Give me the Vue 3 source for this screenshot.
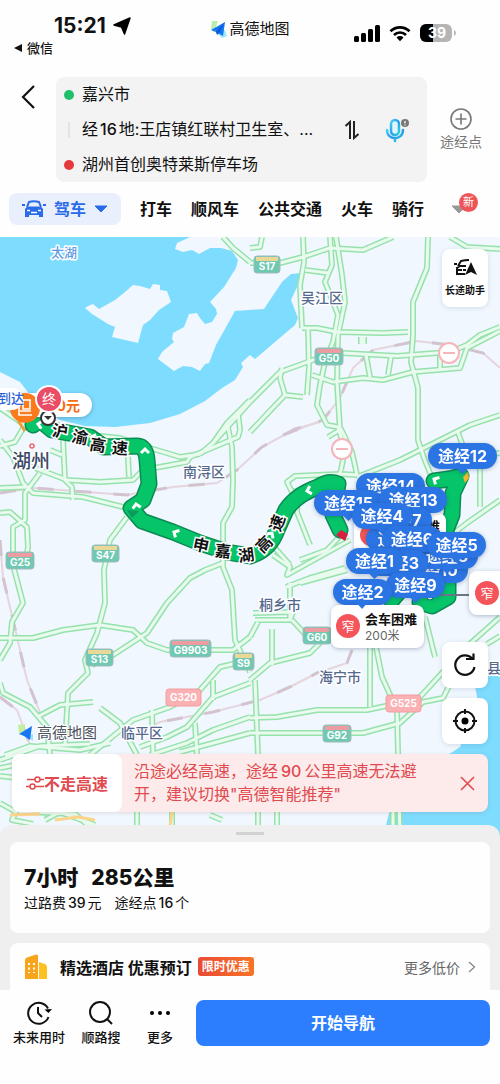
<template>
  <div class="route-page">
    <!-- 状态栏 -->
    <header class="status-bar">
      <div class="status-left">
        <div class="status-time">
          <span>15:21</span>
          <svg width="18" height="18" viewBox="0 0 18 18"><path d="M17 1 11.500 17 8.500 10 1 8z" fill="#000" stroke="#000" stroke-width="1.500" stroke-linejoin="round" /></svg>
        </div>
        <a class="status-back" href="#"><span class="tri"></span>微信</a>
      </div>
      <div class="brand">
        <svg width="18" height="18" viewBox="0 0 18 18">
          <path d="M2 1h6L4 13 1 9z" fill="#b9efad" />
          <path d="m7 13 8-3 2 6-5 2z" fill="#9de7fb" />
          <path d="M15 2 1 10l5 2 7 4z" fill="#1677f2" />
          <path d="M15 2 6 12l1 3 2-2z" fill="#0b56cf" />
        </svg>
        <span>高德地图</span>
      </div>
      <div class="status-right">
        <svg width="26" height="17" viewBox="0 0 26 17">
          <rect x="0" y="11" width="5" height="6" rx="1.5" />
          <rect x="7" y="8" width="5" height="9" rx="1.5" />
          <rect x="14" y="4" width="5" height="13" rx="1.5" />
          <rect x="21" y="0" width="5" height="17" rx="1.5" />
        </svg>
        <svg width="22" height="17" viewBox="0 0 22 17">
          <path d="M1.500 6.300a13.500 13.500 0 0 1 19 0M5 10a8.500 8.500 0 0 1 12 0" fill="none" stroke="#000" stroke-width="2.700" />
          <path d="m7.500 12.500 3.500 3.700 3.500-3.700a5 5 0 0 0-7 0z" />
        </svg>
        <svg width="36" height="18" viewBox="0 0 36 18">
          <rect width="32" height="18" rx="6" fill="#b5b5b5" />
          <path d="M6 0h7v18H6a6 6 0 0 1-6-6V6a6 6 0 0 1 6-6z" />
          <path d="M34 6v6q2-1 2-3t-2-3z" fill="#b5b5b5" />
          <text x="17" y="14" class="battery-text">39</text>
        </svg>
      </div>
    </header>

    <!-- 起终点 -->
    <section class="search-row">
      <button class="icon-btn back" aria-label="返回">
        <svg width="16" height="26" viewBox="0 0 16 26"><path d="M14 2 3 13l11 11" fill="none" stroke="#111" stroke-width="2.200" /></svg>
      </button>
      <div class="address-box">
        <div class="address-list">
          <button class="address"><i class="dot dot-from"></i>嘉兴市</button>
          <button class="address"><i class="bar"></i>经<b>16</b>地:王店镇红联村卫生室、...</button>
          <button class="address"><i class="dot dot-to"></i>湖州首创奥特莱斯停车场</button>
        </div>
        <button class="icon-btn" aria-label="交换">
          <svg width="16" height="20" viewBox="0 0 16 20"><path d="M1.500 6 6 2v17M10 1v17l4.500-4" fill="none" stroke="#222" stroke-width="2" /></svg>
        </button>
        <button class="icon-btn" aria-label="语音">
          <svg width="26" height="26" viewBox="0 0 26 26">
            <defs>
              <linearGradient id="mic" x1="0" y1="0" x2="1" y2="1">
                <stop offset="0" stop-color="#47d3f4" />
                <stop offset=".5" stop-color="#2b96f4" />
                <stop offset="1" stop-color="#25d8d0" />
              </linearGradient>
            </defs>
            <rect x="7" y="3" width="8" height="15" rx="4" fill="#dff6fc" stroke="url(#mic)" stroke-width="2.500" />
            <path d="M3 13c0 11 16 11 16 0M11 21v3" fill="none" stroke="url(#mic)" stroke-width="2.500" stroke-linecap="round" />
            <circle cx="21" cy="6" r="4" fill="#777" />
            <path d="M21 4v2.500M21 7.500v1" stroke="#fff" stroke-width="1.200" />
          </svg>
        </button>
      </div>
      <button class="add-point">
        <svg width="24" height="24" viewBox="0 0 24 24"><path d="M12 6.500v11M6.500 12h11" stroke="#777" stroke-width="1.600" /><circle cx="12" cy="12" r="10" fill="none" stroke="#777" stroke-width="1.600" /></svg>
        <span>途经点</span>
      </button>
    </section>

    <!-- 出行方式 -->
    <nav class="modes">
      <button class="mode active">
        <svg width="24" height="18" viewBox="0 0 24 18">
          <path d="M5 7 7 2q5-1.500 10 0l2 5" fill="none" stroke="#2a6bea" stroke-width="2" />
          <path d="M3 9q1-2.500 4-2.500h10q3 0 4 2.500v8h-4v-2H7v2H3z" fill="#2a6bea" />
          <path d="M0 5h3M21 5h3" stroke="#2a6bea" stroke-width="2" />
          <path d="M5 10.500h3M16 10.500h3M9 12.500h6" stroke="#fff" stroke-width="1.600" />
        </svg>
        <span>驾车</span>
        <svg width="14" height="8" viewBox="0 0 14 8"><path d="M1 1h12L7 7z" fill="#2a6bea" stroke="#2a6bea" stroke-linejoin="round" /></svg>
      </button>
      <button v-for="mode in modes" :key="mode" class="mode">{{ mode }}</button>
      <button class="mode-more" aria-label="更多方式">
        <svg width="16" height="9" viewBox="0 0 16 9"><path d="M1 1h14L8 8z" fill="#999" stroke="#999" stroke-linejoin="round" /></svg>
        <span class="badge">新</span>
      </button>
    </nav>

    <!-- 地图 -->
    <main class="map">
      <svg class="map-canvas" viewBox="0 237 500 600">
        <rect y="237" width="500" height="600" fill="#f0f7fe" />
        <path d="M0 237H190L177 243 175 249 183 252 192 250 199 254 210 248 221 248 232 251 238 260 236 268 224 287 210 302 216 309 217 314 212 322 205 324 200 318 197 313 189 314 184 327 173 333 172 339 174 342 162 352 158 359 174 371 183 366 192 367 200 371 205 364 209 363 216 345 235 311 264 309 282 282 291 274 301 273 297 287 291 300 298 318 295 325 255 359 250 355 241 363 243 367 235 380 222 388 205 401 180 414 150 423 115 427 85 426 60 420 38 405 20 382 0 372Z" fill="#7edcfe" />
        <path d="m88 306 5-2 6 5 16-9 10-8 8-7 7 1 10 3 3-5 7 1v5l7 1 4 11-12 8-9 10-7 5-5 18-26-6 3-10-7-3-16-10-7-6z" fill="#f0f7fe" />
        <path d="M500 676H482L475 686 478 702 460 747 395 790 383 837H500Z" fill="#7edcfe" />

        <!-- 铁路 -->
        <g fill="none">
          <path v-for="(d, i) in rails" :key="'rb' + i" :d="d" class="rail-base" />
          <path v-for="(d, i) in rails" :key="'rd' + i" :d="d" class="rail-dash" />
        </g>

        <!-- 道路 -->
        <g fill="none" stroke-linejoin="round">
          <path v-for="(d, i) in roads" :key="'o' + i" :d="d" class="road-edge" />
          <path v-for="(d, i) in roads" :key="'i' + i" :d="d" class="road-fill" />
          <path d="M10 815 40 814M55 820 78 817 95 820M172 812 170 827" stroke="#fbd58a" stroke-width="3" />
        </g>

        <text v-for="p in places" :key="p.name" :x="p.x" :y="p.y" class="place" :class="p.kind">{{ p.name }}</text>
        <circle cx="32" cy="446" r="2" fill="#fff" stroke="#ec6b70" stroke-width="1.600" />

        <!-- 道路编号 -->
        <g v-for="s in shields" :key="s.name">
          <rect :x="s.x" :y="s.y" :width="s.w" height="17" rx="3" class="shield" :class="{ national: s.red }" />
          <rect v-if="!s.red" :x="s.x + 2" :y="s.y + 1" :width="s.w - 4" height="4" :fill="s.top" />
          <text :x="s.x + s.w / 2" :y="s.red ? s.y + 12 : s.y + 14" class="shield-text">{{ s.name }}</text>
        </g>
        <g v-for="c in closures" :key="c.x" class="closure">
          <circle :cx="c.x" :cy="c.y" r="10" />
          <path :d="`M${c.x - 6} ${c.y}h12`" />
        </g>

        <!-- 导航路线 -->
        <path d="m25 431-6-9 7-10" fill="none" stroke="#e9a33d" stroke-width="3" />
        <g fill="none" stroke-linejoin="round" stroke-linecap="round">
          <path v-for="(d, i) in routes" :key="'a' + i" :d="d" class="route-edge" />
          <path v-for="(d, i) in routes" :key="'b' + i" :d="d" class="route-fill" />
        </g>
        <path d="m336 535 5-5 7 4-3 7z" fill="#d71f3f" />
        <path d="m463 477 5-5 1 6-4 5z" fill="#f2b632" />
        <path d="m127 510 12 1-7 7z" fill="#0a9a5b" />
        <path v-for="(a, i) in arrows" :key="'c' + i" d="M-4 4 0 0 4 4" :transform="`translate(${a[0]} ${a[1]}) rotate(${a[2]})`" class="chevron" />
        <text v-for="(c, i) in roadNames" :key="'n' + i" class="road-name" :transform="`translate(${c[1]} ${c[2]}) rotate(${c[3]})`">{{ c[0] }}</text>

        <!-- 终点 -->
        <rect x="14" y="393" width="78" height="24" rx="12" fill="#fff" class="shadow" />
        <text x="80" y="411" text-anchor="end" class="price">30元</text>
        <circle cx="25" cy="408" r="15" fill="#fb7b1c" />
        <path d="M19 407v8h13M23 400h7v9h-7zM20 411h11" fill="none" stroke="#fff" stroke-width="1.600" />
        <path d="M0 388h12a11 11 0 0 1 0 22H0z" fill="#fff" />
        <text x="-2" y="403" class="arrive">到达</text>
        <circle cx="48" cy="418" r="7" fill="#fff" stroke="#333" stroke-width="2" />
        <path d="m44 416 4 4 4-4" fill="#333" />
        <circle cx="49" cy="399" r="13" fill="#e94c64" stroke="#fff" stroke-width="2" />
        <text x="49" y="404" class="end-text">终</text>

        <!-- 途经点 -->
        <g class="shadow">
          <rect x="354" y="513" width="92" height="42" rx="8" fill="#fff" />
          <circle cx="371" cy="535" r="11" fill="#f3555a" />
          <text x="388" y="531" class="tip-title">会车困难</text>
        </g>
        <path d="M440 595H480" stroke="#6d7688" stroke-width="2" />
        <circle cx="430" cy="597" r="3" fill="#fff" stroke="#0b7f4f" />
        <g v-for="w in waypoints" :key="w.name" class="shadow">
          <path :d="`M${w.x + w.w / 2 - 7} ${w.y + 24}l7 7 7-7z`" fill="#2b74e4" />
          <rect :x="w.x" :y="w.y" :width="w.w" height="26" rx="13" fill="#2b74e4" />
          <text :x="w.x + w.w / 2" :y="w.y + 19" class="way-text">{{ w.name }}</text>
        </g>
        <g class="shadow">
          <rect x="331" y="605" width="93" height="43" rx="8" fill="#fff" />
          <rect x="469" y="571" width="50" height="44" rx="8" fill="#fff" />
        </g>
        <path d="m354 600 8 9 8-9z" fill="#2b74e4" />
        <g v-for="n in narrows" :key="n.x">
          <circle :cx="n.x" :cy="n.y" r="12" fill="#f3555a" />
          <text :x="n.x" :y="n.y + 5" class="narrow">窄</text>
        </g>
        <text x="365" y="624" class="tip-title">会车困难</text>
        <text x="365" y="640" class="tip-sub">200米</text>

        <!-- 地图水印 -->
        <path d="m18 725 7-1-1 12-5-3z" fill="#c4ef9f" />
        <path d="m26 736 7-2v7z" fill="#9de2fa" />
        <path d="m32 726-13 8 5 2 6 4z" fill="#1677f2" />
        <text x="37" y="738" class="watermark">高德地图</text>
      </svg>

      <button class="map-btn helper">
        <svg width="24" height="18" viewBox="0 0 24 18">
          <path d="M5 7 8 2q4-1 8-1M1 5h3M4 16V9l3-2h6M5 11h4M10 11h3M4 15h8" fill="none" stroke="#111" stroke-width="2" />
          <path d="M18 3 12 16l6-3 6 3z" fill="#111" />
        </svg>
        <span>长途助手</span>
      </button>
      <div class="map-tools">
        <button class="map-btn" aria-label="刷新">
          <svg width="26" height="26" viewBox="0 0 26 26"><path d="M20.500 7A9.700 9.700 0 1 0 22.500 15M14 7h7.500V1.500" fill="none" stroke="#111" stroke-width="2.200" /></svg>
        </button>
        <button class="map-btn" aria-label="定位">
          <svg width="26" height="26" viewBox="0 0 26 26"><circle cx="13" cy="13" r="9.500" fill="none" stroke="#111" stroke-width="2" /><circle cx="13" cy="13" r="3.500" /><path d="M13 1v5M13 20v5M1 13h5M20 13h5" stroke="#111" stroke-width="2" /></svg>
        </button>
      </div>

      <div class="notice">
        <button class="notice-tag">
          <svg width="18" height="16" viewBox="0 0 18 16"><g fill="none" stroke="#e14a4e" stroke-width="1.500"><path d="M1 4.500h8M14 4.500h4M0 11.500h4M9 11.500h9" /><circle cx="11.500" cy="4.500" r="2.500" /><circle cx="6.500" cy="11.500" r="2.500" /></g></svg>
          <span>不走高速</span>
        </button>
        <p>沿途必经高速，途经<b>90</b>公里高速无法避开，建议切换"高德智能推荐"</p>
        <button class="icon-btn" aria-label="关闭">
          <svg width="15" height="15" viewBox="0 0 15 15"><path d="m1 1 13 13M14 1 1 14" stroke="#e14a4e" stroke-width="1.600" /></svg>
        </button>
      </div>
    </main>

    <!-- 底部面板 -->
    <section class="sheet">
      <div class="handle"></div>
      <div class="card summary">
        <h2><span>7小时</span><span>285公里</span></h2>
        <p><span>过路费<b>39</b>元</span><span>途经点<b>16</b>个</span></p>
      </div>
      <div class="card hotel">
        <svg width="24" height="26" viewBox="0 0 24 26">
          <path d="M1 6q0-2 2-2.500L12 .500q2-.500 2 1.500V25H1z" fill="#f9a51b" />
          <path d="M15 8l6 2q2 1 2 3v12h-8z" fill="#fcc021" />
          <path d="M5 9v10M10 9v10" stroke="#fff" stroke-width="2" stroke-dasharray="2 2.500" />
        </svg>
        <h3>精选酒店 优惠预订</h3>
        <span class="sale">限时优惠</span>
        <a class="more" href="#">更多低价
          <svg width="8" height="12" viewBox="0 0 8 12"><path d="m1 1 5.500 5L1 11" fill="none" stroke="#888" stroke-width="1.300" /></svg>
        </a>
      </div>
    </section>

    <footer class="footer">
      <button class="tool">
        <svg width="26" height="26" viewBox="0 0 26 26"><path d="M22 8.500A10.500 10.500 0 1 0 22.500 17M12 7v6l4 4" fill="none" stroke="#111" stroke-width="2" /><path d="M18.500 9.500 26 9l-3.500 4z" /></svg>
        <span>未来用时</span>
      </button>
      <button class="tool">
        <svg width="26" height="26" viewBox="0 0 26 26"><circle cx="12" cy="12" r="10" fill="none" stroke="#111" stroke-width="2" /><path d="m19 19 5 5" stroke="#111" stroke-width="2" /></svg>
        <span>顺路搜</span>
      </button>
      <button class="tool">
        <svg width="26" height="26" viewBox="0 0 26 26"><circle cx="5" cy="13" r="2" /><circle cx="13" cy="13" r="2" /><circle cx="21" cy="13" r="2" /></svg>
        <span>更多</span>
      </button>
      <button class="go-btn">开始导航</button>
    </footer>
  </div>
</template>

<script setup>
const modes = ['打车', '顺风车', '公共交通', '火车', '骑行']

const roads = [
  'M303 237 304 262 300 285 302 328',
  'M330 237 332 265 325 282 338 315 333 342 325 362 320 385 317 405 327 425 338 427 345 450 341 470',
  'M336 237 342 275 345 302 338 335 337 382 340 430',
  'M428 237 427 268 413 302 413 335 411 362 418 388 418 440 424 458 432 478',
  'M250 263 280 263 303 257 330 248 363 250 393 237',
  'M223 237 233 248 250 262',
  'M250 248 260 247 262 237',
  'M302 328 317 328 337 332 383 333 408 332',
  'M305 270 328 273',
  'M213 443 250 402 280 372 313 360 343 353 397 356 450 352 467 345 480 335 500 327',
  'M312 375 333 382 363 378 383 380 413 372 460 368 467 348 500 331',
  'M308 328 309 368 307 395',
  'M282 368 280 378 285 395 303 397M250 432 285 395',
  'M366 355 370 377M391 357 388 375M440 355V371M361 337V344M364 337V344',
  'M450 237 467 247 500 249',
  'M357 477 400 460 440 440 470 425 500 415',
  'M341 470 334 490M328 437 341 429 352 452 357 475 341 474 295 476 287 482 292 492 325 482',
  'M298 492 297 512 310 545',
  'M457 430 467 457 500 453M480 457V507M500 500 467 523 445 540',
  'M200 454 180 457 150 448 120 438 90 435 72 430',
  'M250 400 227 423 213 443 200 454',
  'M238 413 240 430 238 437 190 457 187 462 143 470 133 480 100 482 67 480 27 465',
  'M227 423 232 447 233 480 232 507 223 523 223 567 232 590 235 640 250 672',
  'M0 440 13 457 23 483 33 493 83 497 127 508',
  'M63 440 65 480 72 487 73 500M128 457 129 477',
  'M0 408 25 425 15 442 0 446M50 450 62 455',
  'M40 473 25 493 25 520 13 527 13 565 23 603 12 622 10 643 0 660',
  'M0 513 10 512 27 527 28 547 25 567M0 488 27 487',
  'M127 517 110 540 104 570 105 603 97 633 85 660 88 673 68 693 65 745',
  'M223 563 205 570 190 578 167 603 147 633 113 655 92 665',
  'M0 638 33 638 63 630 100 625 133 630 147 643 167 650 233 650 250 637',
  'M0 683 3 693 30 707 47 727 50 755',
  'M37 717 60 705 93 702M100 708 120 723 137 755',
  'M250 660 220 667 200 690 170 707 133 720 90 755',
  'M250 683 213 697 187 727 167 737 140 747',
  'M213 680 213 700M152 710 153 755M195 723 197 755',
  'M250 717 213 730 187 743 150 755M250 733 217 742 180 752',
  'M250 680 270 663 310 653 333 630',
  'M255 620 290 620 293 612 253 613M272 629 272 665M292 620 305 634 318 633',
  'M273 555 290 567 287 575 350 540M286 587 310 578 345 568M300 583 347 570M290 583V620',
  'M275 548 290 565M250 637 258 622',
  'M250 718 277 717 317 710 367 710 400 703 420 697 463 650 500 617',
  'M250 733 287 733 363 733 400 723 423 702 443 698 452 680',
  'M370 647V707M376 647 382 677 397 710 400 837',
  'M425 617 435 657M487 644 500 636M255 680 258 755 258 837',
  'M300 560 327 550 343 533',
  'M0 768 30 762 75 757 125 762M0 776 35 780M0 803 16 812 12 820 33 824M30 812 75 814 90 827',
  'M45 820 60 812 95 825M137 812V830M172 812V830M210 815 222 820M277 812V830M393 812V830',
  'M0 760 40 746 90 744M5 755 30 746 80 750 110 743'
]

const rails = [
  'M283 435 323 420 340 398 353 368 373 350 417 341 450 345 483 353 500 368',
  'M0 493 33 488 127 495 173 487 217 483 237 470 262 447 295 429 320 422',
  'M0 540 3 577 13 620 27 680 43 720 50 740',
  'M0 697 17 710 30 745',
  'M133 737 160 722 213 712 260 700 290 687 317 673 347 663 352 650'
]

const routes = [
  'M33 425 40 420 52 430 90 437 104 447 137 446Q146 446 147 460L149 484 143 500 131 508 142 521 173 532 200 543 227 552 250 556Q270 550 277 530L286 510Q296 495 318 487 329 480 338 484L333 515 340 530',
  'M434 481 449 479 461 476 453 493 452 515 444 535',
  'M380 590 392 600 405 585 420 575M448 575 448 597 432 606 420 602'
]

const arrows = [
  [38, 424, -80], [145, 449, 0], [136, 504, -10], [174, 532, -60], [307, 491, -105], [434, 479, -60], [91, 437, -70], [272, 533, 35]
]

const roadNames = [
  ['沪', 60, 431, 8], ['渝', 80, 437, 12], ['高', 98, 445, 10], ['速', 120, 448, 4],
  ['申', 201, 545, 12], ['嘉', 223, 551, 5], ['湖', 246, 555, -8], ['高', 264, 544, -45], ['速', 277, 523, -70]
]

const places = [
  { name: '太湖', x: 64, y: 257, kind: 'water' },
  { name: '吴江区', x: 322, y: 303 },
  { name: '湖州', x: 31, y: 468, kind: 'city' },
  { name: '南浔区', x: 204, y: 477 },
  { name: '桐乡市', x: 280, y: 610 },
  { name: '海宁市', x: 340, y: 682 },
  { name: '临平区', x: 142, y: 738 },
  { name: '县', x: 494, y: 673 }
]

const shields = [
  { name: 'S17', x: 254, y: 256, w: 26, top: '#e9d896' },
  { name: 'G50', x: 315, y: 348, w: 28, top: '#ef9ba2' },
  { name: 'G25', x: 6, y: 552, w: 28, top: '#ef9ba2' },
  { name: 'S47', x: 92, y: 545, w: 27, top: '#e9d896' },
  { name: 'G9903', x: 170, y: 640, w: 41, top: '#ef9ba2' },
  { name: 'S13', x: 86, y: 649, w: 27, top: '#e9d896' },
  { name: 'S9', x: 233, y: 653, w: 21, top: '#e9d896' },
  { name: 'G60', x: 303, y: 627, w: 28, top: '#ef9ba2' },
  { name: 'G92', x: 323, y: 725, w: 28, top: '#ef9ba2' },
  { name: 'G320', x: 166, y: 689, w: 35, red: true },
  { name: 'G525', x: 386, y: 695, w: 35, red: true }
]

const closures = [{ x: 449, y: 353 }, { x: 342, y: 449 }]

// 按叠放顺序排列
const waypoints = [
  { name: '途经12', x: 428, y: 443, w: 69 },
  { name: '途经10', x: 398, y: 557, w: 70 },
  { name: '途经8', x: 416, y: 543, w: 62 },
  { name: '途经14', x: 356, y: 473, w: 69 },
  { name: '途经15', x: 314, y: 490, w: 69 },
  { name: '途经13', x: 379, y: 487, w: 68 },
  { name: '途经7', x: 370, y: 507, w: 62 },
  { name: '途经11', x: 366, y: 526, w: 69 },
  { name: '途经4', x: 352, y: 503, w: 60 },
  { name: '途经6', x: 382, y: 526, w: 60 },
  { name: '途经5', x: 427, y: 532, w: 59 },
  { name: '途经3', x: 368, y: 550, w: 60 },
  { name: '途经1', x: 346, y: 548, w: 57 },
  { name: '途经9', x: 386, y: 572, w: 59 },
  { name: '途经2', x: 333, y: 579, w: 59 }
]

const narrows = [{ x: 348, y: 626 }, { x: 487, y: 593 }]
</script>

<style>
body {
  margin: 0;
  background: #fff;
}
</style>

<style scoped>
.route-page {
  font-family: Inter, 'Noto Sans CJK SC', sans-serif;
  color: #111;
  background: #fefefe;
  overflow: hidden;
}

button {
  margin: 0;
  padding: 0;
  border: none;
  background: none;
  font-family: inherit;
  color: inherit;
  cursor: pointer;
}

a {
  color: inherit;
  text-decoration: none;
}

svg {
  display: block;
  flex-shrink: 0;
}

/* 状态栏 */
.status-bar {
  display: grid;
  grid-template-columns: 1fr auto 1fr;
  align-items: start;
  height: 63px;
  padding: 14px 14px 0;
}

.status-time {
  display: flex;
  align-items: center;
  gap: 7px;
  padding-left: 40px;
  font-size: 21px;
  font-weight: 700;
  line-height: 24px;
}

.status-back {
  display: flex;
  align-items: center;
  gap: 5px;
  font-size: 13px;
  font-weight: 500;
  line-height: 20px;
}

.tri {
  border: 4px solid transparent;
  border-right: 8px solid #111;
  border-left: 0;
}

.brand {
  display: flex;
  align-items: center;
  gap: 1px;
  padding-top: 5px;
  font-size: 15px;
  line-height: 20px;
}

.status-right {
  display: flex;
  justify-content: flex-end;
  align-items: center;
  gap: 9px;
  padding: 10px 30px 0 0;
}

.battery-text {
  font-size: 14px;
  font-weight: 700;
  fill: #fff;
  text-anchor: middle;
}

/* 起终点 */
.search-row {
  display: flex;
  align-items: center;
  padding-right: 18px;
}

.icon-btn {
  display: flex;
  align-items: center;
  justify-content: center;
}

.back {
  align-self: flex-start;
  width: 56px;
  padding-top: 7px;
}

.address-box {
  display: flex;
  flex: 1;
  align-items: center;
  gap: 24px;
  min-width: 0;
  padding: 0 17px 0 8px;
  border-radius: 8px;
  background: #f3f3f3;
}

.address-list {
  flex: 1;
  min-width: 0;
}

.address {
  display: flex;
  align-items: center;
  width: 100%;
  font-size: 16px;
  line-height: 35px;
  white-space: nowrap;
}

.address b {
  margin: 0 2px;
  font-weight: 500;
}

.dot {
  width: 10px;
  height: 10px;
  margin-right: 8px;
  border-radius: 50%;
}

.dot-from {
  background: #1fbf6b;
}

.dot-to {
  background: #e5393c;
}

.bar {
  width: 2px;
  height: 16px;
  margin: 0 12px 0 4px;
  background: #e3e3e3;
}

.add-point {
  display: flex;
  flex-direction: column;
  align-items: center;
  gap: 1px;
  margin-left: 13px;
  font-size: 14px;
  line-height: 20px;
  color: #777;
}

/* 出行方式 */
.modes {
  display: flex;
  align-items: center;
  gap: 19px;
  padding: 11px 9px 12px;
}

.mode {
  font-size: 16px;
  font-weight: 700;
  line-height: 32px;
  white-space: nowrap;
}

.mode.active {
  display: flex;
  align-items: center;
  gap: 8px;
  padding: 0 13px;
  border-radius: 8px;
  background: #e9effc;
  color: #2a6bea;
}

.mode-more {
  position: relative;
  margin-left: 8px;
}

.badge {
  position: absolute;
  left: 8px;
  bottom: 2px;
  width: 19px;
  border-radius: 50%;
  background: #ee5558;
  color: #fff;
  font-size: 11px;
  line-height: 19px;
}

/* 地图 */
.map {
  position: relative;
}

.map-canvas {
  width: 100%;
  height: auto;
}

.road-edge {
  stroke: #96e2ab;
  stroke-width: 6;
}

.road-fill {
  stroke: #e9faef;
  stroke-width: 3;
}

.rail-base {
  stroke: #e6d5dd;
  stroke-width: 2;
}

.rail-dash {
  stroke: #d3c3ce;
  stroke-width: 3;
  stroke-dasharray: 16 22;
}

.place {
  font-size: 14px;
  font-weight: 500;
  fill: #55698f;
  text-anchor: middle;
  stroke: #fff;
  stroke-width: 3px;
  stroke-linejoin: round;
  paint-order: stroke;
}

.place.water {
  font-size: 13px;
  fill: #5f9be0;
}

.place.city {
  font-size: 19px;
  fill: #3c4a66;
}

.shield {
  fill: #6fc9b2;
  stroke: #a5b9bd;
}

.shield.national {
  fill: #fbb1b3;
  stroke: #f39ca0;
}

.shield-text {
  font-size: 10px;
  font-weight: 700;
  fill: #fff;
  text-anchor: middle;
}

.closure {
  fill: #fff;
  stroke: #f5b5bb;
  stroke-width: 2;
}

.route-edge {
  stroke: #0b8a55;
  stroke-width: 17;
}

.route-fill {
  stroke: #06c468;
  stroke-width: 14;
}

.chevron {
  fill: none;
  stroke: #fff;
  stroke-width: 3;
}

.road-name {
  font-size: 16px;
  font-weight: 700;
  fill: #111;
  text-anchor: middle;
  dominant-baseline: central;
  stroke: #fff;
  stroke-width: 3px;
  paint-order: stroke;
}

.shadow {
  filter: drop-shadow(0 1px 2px rgba(20, 40, 90, 0.3));
}

.price {
  font-size: 14px;
  font-weight: 700;
  fill: #f56c14;
}

.arrive {
  font-size: 13px;
  font-weight: 500;
  fill: #2a62d8;
}

.end-text {
  font-size: 14px;
  fill: #fff;
  text-anchor: middle;
}

.way-text {
  font-size: 16px;
  font-weight: 700;
  fill: #fff;
  text-anchor: middle;
}

.narrow {
  font-size: 13px;
  fill: #fff;
  text-anchor: middle;
}

.tip-title {
  font-size: 13px;
  font-weight: 700;
  fill: #111;
}

.tip-sub {
  font-size: 12px;
  fill: #666;
}

.watermark {
  font-size: 15px;
  fill: #4b525e;
  stroke: #fff;
  stroke-width: 2px;
  paint-order: stroke;
}

.map-btn {
  display: flex;
  flex-direction: column;
  align-items: center;
  justify-content: center;
  width: 46px;
  height: 46px;
  border-radius: 8px;
  background: #fff;
  box-shadow: 0 1px 5px rgba(40, 60, 100, 0.15);
}

.helper {
  position: absolute;
  top: 12px;
  right: 12px;
  gap: 5px;
  height: 58px;
  font-size: 10px;
  font-weight: 700;
  line-height: 16px;
  white-space: nowrap;
}

.map-tools {
  position: absolute;
  right: 12px;
  bottom: 93px;
  display: flex;
  flex-direction: column;
  gap: 10px;
}

.notice {
  position: absolute;
  right: 12px;
  bottom: 25px;
  left: 12px;
  display: flex;
  align-items: stretch;
  border-radius: 8px;
  background: #fdebeb;
  box-shadow: 0 1px 4px rgba(120, 60, 60, 0.15);
  color: #e14a4e;
}

.notice-tag {
  display: flex;
  align-items: center;
  justify-content: center;
  flex-shrink: 0;
  width: 110px;
  border-radius: 8px;
  background: #fff;
  font-size: 16px;
  font-weight: 700;
}

.notice p {
  flex: 1;
  margin: 0;
  padding: 6px 8px 6px 12px;
  font-size: 16px;
  line-height: 23px;
}

.notice b {
  margin: 0 3px;
  font-weight: 500;
}

.notice .icon-btn {
  width: 42px;
}

/* 底部面板 */
.sheet {
  position: relative;
  margin-top: -12px;
  padding: 0 10px;
  border-radius: 12px 12px 0 0;
  background: #efefef;
}

.handle {
  width: 28px;
  height: 3px;
  margin: 0 auto;
  border-radius: 2px;
  background: #d2d2d2;
  border-top: 7px solid #efefef;
  border-bottom: 7px solid #efefef;
}

.card {
  border-radius: 8px;
  background: #fefefe;
}

.summary {
  padding: 21px 14px 19px;
}

.summary h2 {
  display: flex;
  gap: 13px;
  margin: 0;
  font-size: 21px;
  font-weight: 800;
  line-height: 29px;
}

.summary p {
  display: flex;
  gap: 13px;
  margin: 0;
  font-size: 14px;
  line-height: 22px;
}

.summary b {
  margin: 0 2px;
  font-weight: 500;
}

.hotel {
  display: flex;
  align-items: center;
  height: 47px;
  margin-top: 10px;
  padding: 0 14px;
  border-radius: 8px 8px 0 0;
}

.hotel h3 {
  margin: 0 6px 0 12px;
  font-size: 16px;
  font-weight: 700;
  white-space: nowrap;
}

.sale {
  padding: 0 4px;
  border-radius: 3px;
  background: linear-gradient(90deg, #e84b34, #fa7328);
  color: #fff;
  font-size: 12px;
  font-weight: 700;
  line-height: 19px;
}

.more {
  display: flex;
  align-items: center;
  gap: 8px;
  margin-left: auto;
  font-size: 14px;
  color: #666;
}

/* 底部操作栏 */
.footer {
  display: flex;
  align-items: center;
  gap: 13px;
  padding: 10px 10px 38px 13px;
}

.tool {
  display: flex;
  flex-direction: column;
  align-items: center;
  gap: 2px;
  min-width: 46px;
  font-size: 13px;
  font-weight: 500;
  line-height: 18px;
  white-space: nowrap;
}

.go-btn {
  flex: 1;
  border-radius: 8px;
  background: #2d7eff;
  color: #fff;
  font-size: 16px;
  font-weight: 700;
  line-height: 46px;
}
</style>
